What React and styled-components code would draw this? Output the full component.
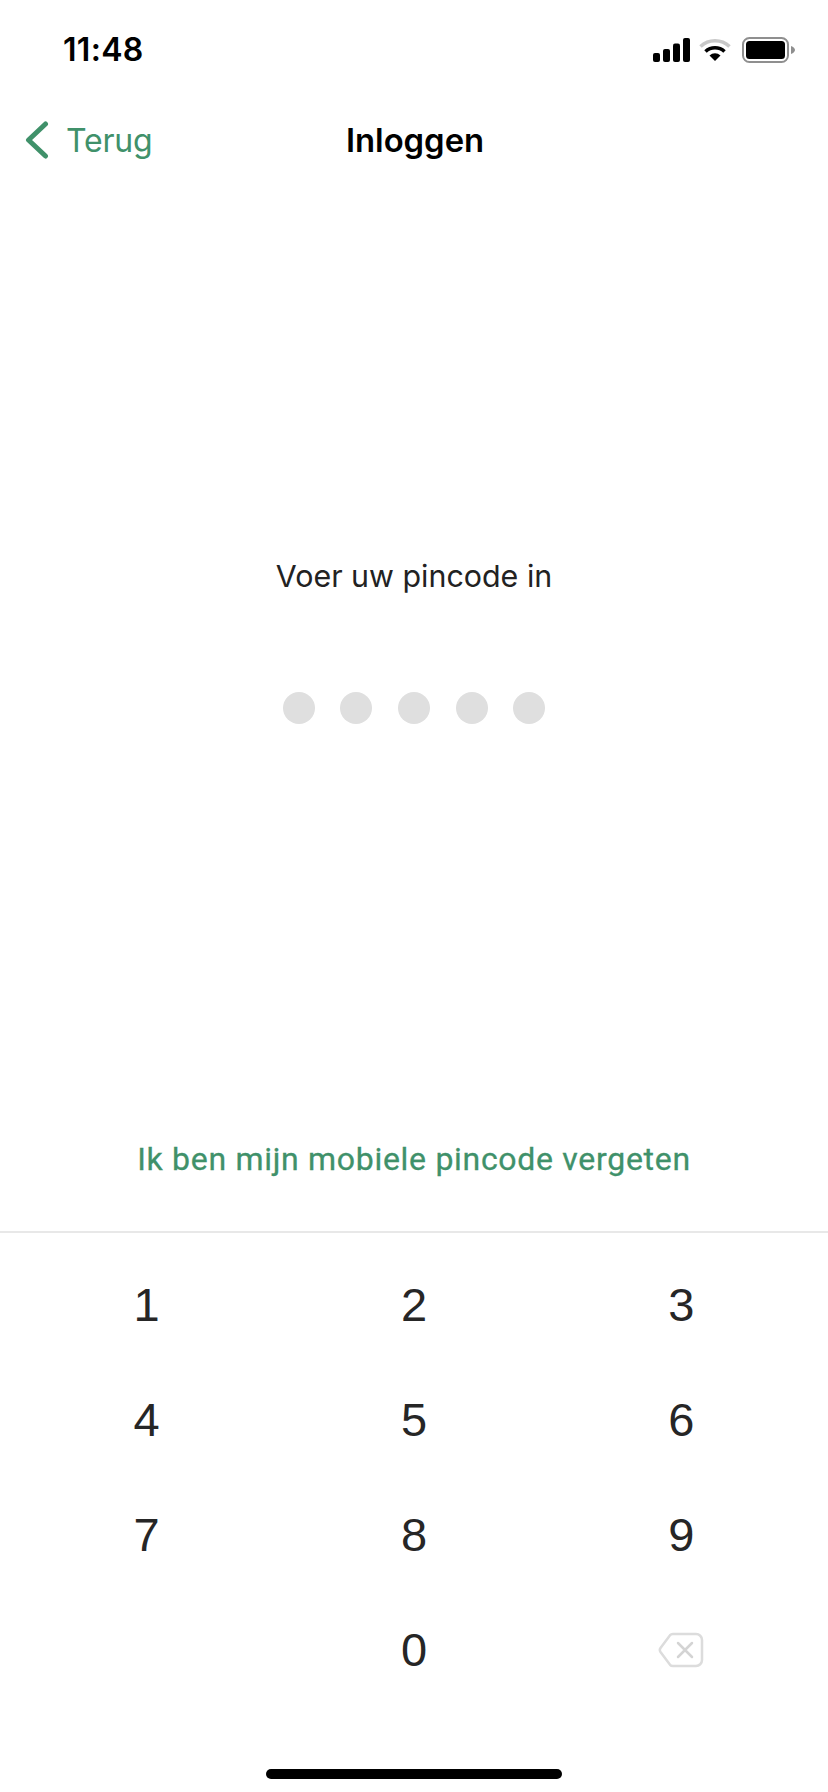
import React from "react";
import styled, { createGlobalStyle } from "styled-components";

const GREEN = "#40916a";

const Global = createGlobalStyle`
  html, body { margin: 0; padding: 0; background: #fff; }
  * { box-sizing: border-box; }
`;

const Page = styled.div`
  width: 828px;
  height: 1792px;
  display: flex;
  flex-direction: column;
  background: #fff;
  font-family: Inter, "Liberation Sans", sans-serif;
  overflow: hidden;
`;

const StatusBar = styled.div`
  height: 88px;
  padding: 0 32px 0 63px;
  display: flex;
  align-items: center;
  justify-content: space-between;
`;

const Time = styled.span`
  font-size: 32px;
  font-weight: 600;
  color: #000;
  letter-spacing: 0.3px;
  position: relative;
  top: 5px;
`;

const StatusIcons = styled.div`
  display: flex;
  align-items: center;
  gap: 8px;
  margin-top: 12px;
`;

const BatterySvg = styled.svg`
  margin-left: 3px;
`;

const NavBar = styled.div`
  height: 104px;
  display: grid;
  grid-template-columns: 1fr auto 1fr;
  align-items: center;
`;

const BackLink = styled.div`
  display: flex;
  align-items: center;
  gap: 16px;
  padding-left: 24px;
  color: ${GREEN};
  font-size: 32px;
  font-weight: 400;
  letter-spacing: -0.2px;
`;

const Title = styled.div`
  font-size: 32.800px;
  font-weight: 600;
  color: #000;
  padding-left: 2px;
`;

const Main = styled.div`
  flex: 1;
  display: flex;
  flex-direction: column;
  align-items: center;
  padding-top: 364px;
`;

const Prompt = styled.div`
  font-size: 30.400px;
  line-height: 40px;
  color: #222;
`;

const Dots = styled.div`
  display: flex;
  gap: 25.600px;
  margin-top: 96px;
`;

const Dot = styled.span`
  width: 32px;
  height: 32px;
  border-radius: 50%;
  background: #dfdfdf;
`;

const ForgotLink = styled.div`
  height: 40px;
  line-height: 40px;
  margin-top: auto;
  margin-bottom: 52px;
  font-family: Roboto, sans-serif;
  font-size: 32px;
  font-weight: 400;
  letter-spacing: 0.700px;
  -webkit-text-stroke: 0.300px ${GREEN};
  color: ${GREEN};
`;

const Keypad = styled.div`
  border-top: 2px solid #e8e8e8;
  padding: 14px 13px 0;
  display: grid;
  grid-template-columns: repeat(3, 1fr);
  grid-auto-rows: 115px;
`;

const Key = styled.div`
  display: flex;
  align-items: center;
  justify-content: center;
  font-family: "Liberation Sans", Arial, sans-serif;
  font-size: 47px;
  color: #262626;
`;

const HomeArea = styled.div`
  height: 85px;
  display: flex;
  justify-content: center;
  padding-top: 62px;
`;

const HomeBar = styled.div`
  width: 296px;
  height: 10px;
  border-radius: 5px;
  background: #000;
`;

const Signal = () => (
  <svg width="38" height="24" viewBox="0 0 38 24">
    <rect x="0" y="15" width="7" height="9" rx="2" fill="#000" />
    <rect x="10" y="11" width="7" height="13" rx="2" fill="#000" />
    <rect x="20" y="5.500" width="7" height="18.500" rx="2" fill="#000" />
    <rect x="30" y="0" width="7" height="24" rx="2" fill="#000" />
  </svg>
);

const Wifi = () => (
  <svg width="32" height="24" viewBox="0 0 32 24">
    <path d="M1.500 8.500 A21 21 0 0 1 30.500 8.500" fill="none" stroke="#c8c8c8" strokeWidth="3.600" />
    <path d="M6.500 13.500 A14 14 0 0 1 25.500 13.500" fill="none" stroke="#000" strokeWidth="3.600" />
    <path d="M10.500 17.500 L16 23 L21.500 17.500 A8 8 0 0 0 10.500 17.500 Z" fill="#000" />
  </svg>
);

const Battery = () => (
  <BatterySvg width="54" height="26" viewBox="0 0 54 26">
    <rect x="1" y="1" width="45" height="24" rx="6.500" fill="none" stroke="#8f8f8f" strokeWidth="2" />
    <rect x="4" y="4" width="39" height="18" rx="3.500" fill="#000" />
    <path d="M49 9 C51.500 10 53 11.500 53 13 C53 14.500 51.500 16 49 17 Z" fill="#8f8f8f" />
  </BatterySvg>
);

const Chevron = () => (
  <svg width="26" height="38" viewBox="0 0 26 38">
    <path d="M21.500 3 L4.500 19 L21.500 35" fill="none" stroke={GREEN} strokeWidth="5" strokeLinecap="round" strokeLinejoin="round" />
  </svg>
);

const Backspace = () => (
  <svg width="46" height="36" viewBox="0 0 46 36">
    <path
      d="M15 2 H38 A6 6 0 0 1 44 8 V28 A6 6 0 0 1 38 34 H15 A4 4 0 0 1 12 32.800 L2.500 20 A3.500 3.500 0 0 1 2.500 16 L12 3.200 A4 4 0 0 1 15 2 Z"
      fill="none"
      stroke="#dcdcdc"
      strokeWidth="2.500"
    />
    <path d="M20 11 L34 25 M34 11 L20 25" stroke="#d4d4d4" strokeWidth="2.500" strokeLinecap="round" />
  </svg>
);

const digits = ["1", "2", "3", "4", "5", "6", "7", "8", "9"];

export default function App() {
  return (
    <Page>
      <Global />
      <StatusBar>
        <Time>11:48</Time>
        <StatusIcons>
          <Signal />
          <Wifi />
          <Battery />
        </StatusIcons>
      </StatusBar>
      <NavBar>
        <BackLink>
          <Chevron />
          Terug
        </BackLink>
        <Title>Inloggen</Title>
      </NavBar>
      <Main>
        <Prompt>Voer uw pincode in</Prompt>
        <Dots>
          {[0, 1, 2, 3, 4].map((i) => (
            <Dot key={i} />
          ))}
        </Dots>
        <ForgotLink>Ik ben mijn mobiele pincode vergeten</ForgotLink>
      </Main>
      <Keypad>
        {digits.map((d) => (
          <Key key={d}>{d}</Key>
        ))}
        <Key />
        <Key>0</Key>
        <Key>
          <Backspace />
        </Key>
      </Keypad>
      <HomeArea>
        <HomeBar />
      </HomeArea>
    </Page>
  );
}
